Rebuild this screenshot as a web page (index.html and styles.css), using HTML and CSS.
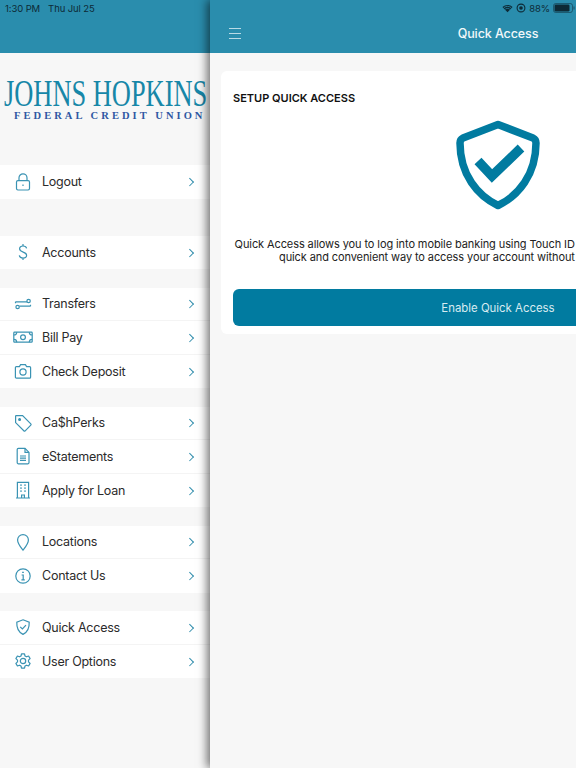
FILE: index.html
```html
<!DOCTYPE html>
<html lang="en">
<head>
    <meta charset="UTF-8">
    <meta name="viewport" content="width=device-width, initial-scale=1.0">
    <title>Quick Access</title>
    <link rel="stylesheet" href="styles.css">
</head>
<body>
    <div class="status">
        <div class="status-left"><span>1:30 PM</span><span>Thu Jul 25</span></div>
        <div class="status-right">
            <svg width="11" height="9" viewBox="0 0 12 10"><path d="M6 9.200 0.400 3.400C3.600 0.400 8.400 0.400 11.600 3.400Z" fill="#0d2a36"/><path d="M2 4C4.400 2.200 7.600 2.200 10 4" stroke="#2a8dad" stroke-width=".9" fill="none"/><path d="M3.600 5.700C5 4.700 7 4.700 8.400 5.700" stroke="#2a8dad" stroke-width=".9" fill="none"/></svg>
            <svg width="10" height="10" viewBox="0 0 10 10"><circle cx="5" cy="5" r="3.900" fill="none" stroke="#0d2a36" stroke-width="1.100"/><circle cx="5" cy="5" r="1.800" fill="#0d2a36"/></svg>
            <span>88%</span>
            <svg width="22" height="10" viewBox="0 0 22 10"><rect x="0.500" y="0.500" width="19" height="9" rx="2.200" fill="none" stroke="#0d2a36" stroke-opacity=".5"/><rect x="1.500" y="1.500" width="15" height="7" rx="1.300" fill="#0d2a36"/><rect x="20.400" y="3.500" width="1.200" height="3" fill="#0d2a36" fill-opacity=".5"/></svg>
        </div>
    </div>

    <div class="app">
        <div class="side">
            <div class="side-head"></div>
            <div class="logo">
                <div class="logo-main">JOHNS HOPKINS</div>
                <div class="logo-sub">FEDERAL CREDIT UNION</div>
            </div>

            <div class="group group-logout">
                <div class="row">
                    <svg class="ico" viewBox="0 0 20 20"><rect x="3.500" y="8.600" width="13" height="9.400" rx="1.400"/><path d="M6 8.600V5.800a4 4 0 0 1 8 0v2.800"/><path d="M10 12.400v1.600"/></svg>
                    <span class="lbl">Logout</span><span class="chev"></span>
                </div>
            </div>

            <div class="group">
                <div class="row">
                    <svg class="ico" viewBox="0 0 20 20"><path d="M13.600 6.400C13.400 4.800 12 4 10 4 8 4 6.600 5 6.600 6.800c0 4 7 2.600 7 6.400 0 1.800-1.600 2.800-3.600 2.800s-3.500-.9-3.700-2.600"/><path d="M10 2v2M10 16v2"/></svg>
                    <span class="lbl">Accounts</span><span class="chev"></span>
                </div>
            </div>

            <div class="group">
                <div class="row">
                    <svg class="ico" viewBox="0 0 20 20"><path d="M2.500 7.800h11.500M17.500 12.200H6.500"/><circle cx="15.600" cy="7" r="1.700"/><circle cx="4.600" cy="13" r="1.700"/><path d="M2.500 7.800v1.400M17.500 12.200v-1.400"/></svg>
                    <span class="lbl">Transfers</span><span class="chev"></span>
                </div>
                <div class="row">
                    <svg class="ico" viewBox="0 0 20 20"><rect x=".8" y="5.200" width="18.400" height="10" rx=".8"/><circle cx="10" cy="10.200" r="2.400"/><path d="M.8 8c1.600 0 2.900-1.200 2.900-2.800M19.200 8c-1.600 0-2.900-1.200-2.900-2.800M.8 12.400c1.600 0 2.900 1.200 2.900 2.800M19.200 12.400c-1.600 0-2.900 1.200-2.900 2.800"/></svg>
                    <span class="lbl">Bill Pay</span><span class="chev"></span>
                </div>
                <div class="row">
                    <svg class="ico" viewBox="0 0 20 20"><path d="M3.400 5.600h3l1.200-2h4.800l1.200 2h3a1 1 0 0 1 1 1v9.600a1 1 0 0 1-1 1H3.400a1 1 0 0 1-1-1V6.600a1 1 0 0 1 1-1z"/><circle cx="10" cy="11" r="3.100"/></svg>
                    <span class="lbl">Check Deposit</span><span class="chev"></span>
                </div>
            </div>

            <div class="group">
                <div class="row">
                    <svg class="ico" viewBox="0 0 20 20"><path d="M3.200 2.600h6.400l8.200 8.200a1 1 0 0 1 0 1.400l-5.600 5.600a1 1 0 0 1-1.400 0L2.600 9.600V3.200a.6.6 0 0 1 .6-.6z"/><circle cx="6.600" cy="6.400" r=".9" fill="#3a93b3"/></svg>
                    <span class="lbl">Ca$hPerks</span><span class="chev"></span>
                </div>
                <div class="row">
                    <svg class="ico" viewBox="0 0 20 20"><path d="M5.400 2.400h6.600l4 4v10.200a1.200 1.200 0 0 1-1.200 1.200H5.400a1.200 1.200 0 0 1-1.200-1.200V3.600a1.200 1.200 0 0 1 1.200-1.200z"/><path d="M12 2.400v4h4M7 10h6M7 12.200h6M7 14.400h6"/></svg>
                    <span class="lbl">eStatements</span><span class="chev"></span>
                </div>
                <div class="row">
                    <svg class="ico" viewBox="0 0 20 20"><path d="M4.400 18V2.400h11.200V18M3 18h14M8.600 18v-3h2.800v3"/><path d="M7.400 5.200h1.200M11.400 5.200h1.200M7.400 8.200h1.200M11.400 8.200h1.200M7.400 11.200h1.200M11.400 11.200h1.200" stroke-width="1.700"/></svg>
                    <span class="lbl">Apply for Loan</span><span class="chev"></span>
                </div>
            </div>

            <div class="group">
                <div class="row">
                    <svg class="ico" viewBox="0 0 20 20"><path d="M10 18.200C7.400 14.800 4.600 11.600 4.600 8a5.400 5.400 0 0 1 10.800 0c0 3.600-2.800 6.800-5.400 10.200z"/></svg>
                    <span class="lbl">Locations</span><span class="chev"></span>
                </div>
                <div class="row">
                    <svg class="ico" viewBox="0 0 20 20"><circle cx="10" cy="10" r="7.200"/><path d="M8.600 9h1.600v4.600M8.400 13.800h3.400"/><path d="M10 5.800v1.300" stroke-width="1.700"/></svg>
                    <span class="lbl">Contact Us</span><span class="chev"></span>
                </div>
            </div>

            <div class="group">
                <div class="row">
                    <svg class="ico" viewBox="0 0 20 20"><path d="M10 2.800l6.200 2.400c.3 5.800-1.600 9.800-6.200 12.200C5.400 15 3.500 11 3.800 5.200z"/><path d="M7.200 9.800l2.200 2.200 3.600-3.800"/></svg>
                    <span class="lbl">Quick Access</span><span class="chev"></span>
                </div>
                <div class="row">
                    <svg class="ico" viewBox="0 0 20 20"><circle cx="10" cy="10" r="2.700"/><path d="M8.500 2.800h3l.5 2.200 1.500.8 2.100-.8 1.500 2.600-1.600 1.500v1.800l1.600 1.500-1.500 2.600-2.100-.8-1.500.8-.5 2.200h-3l-.5-2.200-1.500-.8-2.100.8-1.500-2.600 1.600-1.500V9.100L2.900 7.600l1.500-2.600 2.100.8 1.500-.8z" stroke-linejoin="round"/></svg>
                    <span class="lbl">User Options</span><span class="chev"></span>
                </div>
            </div>
        </div>

        <div class="main">
            <div class="main-head">
                <svg class="burger" width="12" height="11" viewBox="0 0 12 11"><path d="M0 .5h12M0 5.500h12M0 10.500h12" stroke="#b9dbe6" stroke-width="1"/></svg>
                <h1>Quick Access</h1>
            </div>
            <div class="card">
                <h2>SETUP QUICK ACCESS</h2>
                <svg class="shield" width="84" height="90" viewBox="0 0 84 90">
                    <path d="M42 4.500 77 18Q80 19.500 80 23C80 55 62 76 42 85.500 22 76 4 55 4 23 4 19.500 7 18 7 18Z" fill="none" stroke="#017ba0" stroke-width="7.500" stroke-linejoin="round"/>
                    <path d="M22 41 36 56 65 28" fill="none" stroke="#017ba0" stroke-width="9.500" stroke-linejoin="miter"/>
                </svg>
                <p>Quick Access allows you to log into mobile banking using Touch ID or Face ID. Quick Access provides a<br>quick and convenient way to access your account without re-entering your password.</p>
                <button>Enable Quick Access</button>
            </div>
        </div>
    </div>
</body>
</html>
```

FILE: styles.css
```css
* {
    box-sizing: border-box;
}
html, body {
    margin: 0;
    height: 768px;
    overflow: hidden;
}
body {
    font-family: Inter, "Liberation Sans", sans-serif;
    background-color: #f7f7f7;
    position: relative;
}
.status {
    position: absolute;
    top: 0;
    left: 0;
    width: 576px;
    height: 16px;
    padding: 0 1px 0 5px;
    display: flex;
    justify-content: space-between;
    align-items: center;
    font-size: 9.500px;
    letter-spacing: -.1px;
    color: #0d2a36;
    z-index: 5;
}
.status-left span {
    margin-right: 8px;
}
.status-right {
    display: flex;
    align-items: center;
    gap: 3px;
}
.app {
    display: flex;
    width: 786px;
    height: 768px;
}
.side {
    width: 210px;
    flex-shrink: 0;
}
.side-head {
    height: 53px;
    background-color: #2a8dad;
}
.logo {
    height: 112px;
    padding-top: 23px;
    white-space: nowrap;
}
.logo-main {
    font-family: "Liberation Serif", serif;
    font-size: 38px;
    line-height: 34px;
    color: #1787a8;
    transform: scaleX(.695);
    transform-origin: 4px 0;
    padding-left: 4px;
    width: 290px;
}
.logo-sub {
    font-family: "Liberation Serif", serif;
    font-weight: bold;
    font-size: 10.500px;
    line-height: 12px;
    letter-spacing: 3.050px;
    color: #2f57a3;
    padding-left: 14px;
}
.group {
    margin-bottom: 18.500px;
    background-color: #fff;
}
.group-logout {
    margin-bottom: 37px;
}
.row {
    height: 33.500px;
    display: flex;
    align-items: center;
    padding: 0 16px 0 12.500px;
    border-bottom: 1px solid #f4f4f4;
}
.row:last-child {
    border-bottom: none;
}
.ico {
    width: 20px;
    height: 20px;
    margin-right: 9.500px;
    fill: none;
    stroke: #3a93b3;
    stroke-width: 1.200;
    flex-shrink: 0;
}
.lbl {
    flex: 1;
    font-size: 12.500px;
    letter-spacing: -.25px;
    color: #2b2b2b;
}
.chev {
    width: 5.500px;
    height: 5.500px;
    margin-right: 2px;
    border-top: 1.300px solid #2f8cab;
    border-right: 1.300px solid #2f8cab;
    transform: rotate(45deg);
}
.main {
    width: 576px;
    flex-shrink: 0;
    background-color: #f7f7f7;
    box-shadow: -3px 0 9px rgba(0, 0, 0, .55);
    position: relative;
}
.main-head {
    height: 53px;
    background-color: #2a8dad;
    padding: 14px 0 0 19px;
    display: flex;
    align-items: center;
}
.burger {
    flex-shrink: 0;
}
.main-head h1 {
    flex: 1;
    margin: 0 31px 0 0;
    text-align: center;
    font-size: 12.500px;
    letter-spacing: -.1px;
    font-weight: 500;
    color: #f2f8fa;
}
.card {
    margin: 18px 11px 0 11px;
    height: 263px;
    padding: 20px 12px 0;
    background-color: #fff;
    border-radius: 6px;
    text-align: center;
}
.card h2 {
    margin: 0;
    text-align: left;
    font-size: 11px;
    line-height: 15px;
    font-weight: 600;
    color: #111;
}
.shield {
    display: block;
    margin: 14px auto 0;
}
.card p {
    margin: 28px 0 0;
    font-size: 11px;
    letter-spacing: -.1px;
    line-height: 13px;
    color: #222;
    white-space: nowrap;
}
.card button {
    display: block;
    width: 100%;
    height: 37px;
    margin-top: 25px;
    border: none;
    border-radius: 6px;
    background-color: #017ba0;
    color: #d8ebf1;
    font-family: inherit;
    font-size: 11.400px;
}
```
